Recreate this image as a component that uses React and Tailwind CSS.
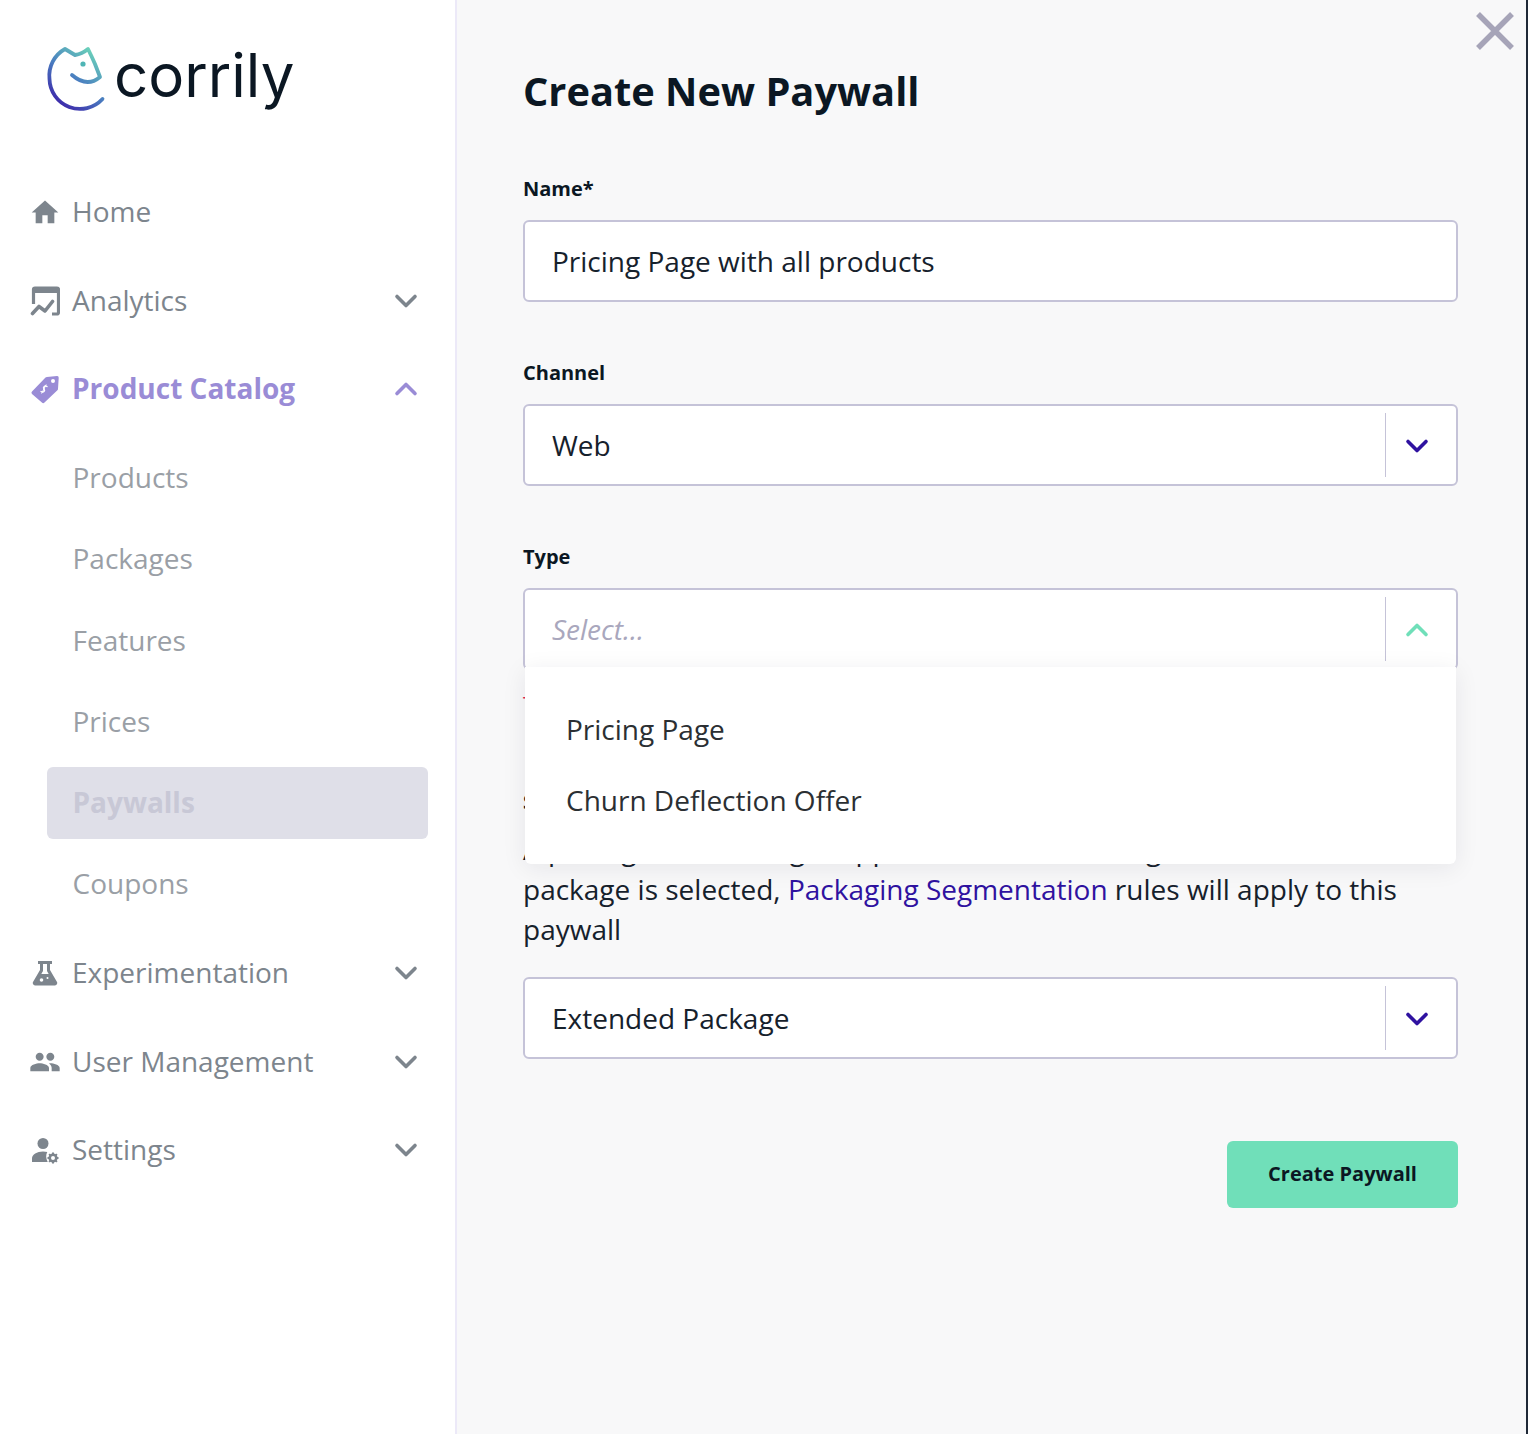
import React from 'react';
import { ChevronDown, ChevronUp } from 'lucide-react';
import { MdHome, MdPeople } from 'react-icons/md';

function Logo() {
  return (
    <svg width="70" height="76" viewBox="44 42 70 76" className="shrink-0">
      <defs>
        <linearGradient id="logoGrad" x1="52" y1="108" x2="98" y2="48" gradientUnits="userSpaceOnUse">
          <stop offset="0" stopColor="#3a16a6" />
          <stop offset="0.5" stopColor="#4a7fc0" />
          <stop offset="1" stopColor="#70dfb9" />
        </linearGradient>
      </defs>
      <path
        d="M102.5 99 A 30.5 30.5 0 0 1 49.5 79 A 30.5 30.5 0 0 1 65 49 L75 55 Q82 54 88 49 Q92 57 95 64 L100 77 Q87 88 72 75"
        fill="none"
        stroke="url(#logoGrad)"
        strokeWidth="3.8"
        strokeLinecap="round"
        strokeLinejoin="round"
      />
      <circle cx="83" cy="64" r="2.6" fill="#4fb5b5" />
    </svg>
  );
}

const AnalyticsIcon = () => (
  <svg width="30" height="30" viewBox="0 0 30 30" fill="none">
    <path d="M3.5 18V3.5A1.5 1.5 0 0 1 5 2h22a1.5 1.5 0 0 1 1.5 1.5v23a1.5 1.5 0 0 1-1.5 1.5h-5" stroke="#7d858d" strokeWidth="3.2" />
    <path d="M3 2h25v5H3z" fill="#7d858d" />
    <path d="M2.5 27.5l6.5-7 6 4.5 7.5-9.5" stroke="#7d858d" strokeWidth="3.6" strokeLinecap="round" strokeLinejoin="round" />
  </svg>
);

const TagIcon = () => (
  <svg width="30" height="30" viewBox="0 0 30 30">
    <path d="M2 17.5 15.5 3.5a2 2 0 0 1 1.4-.6L27 2a1.6 1.6 0 0 1 1.7 1.7L28 15a2 2 0 0 1-.6 1.3L14.5 28.5a1.8 1.8 0 0 1-2.6 0L2 19.9a1.7 1.7 0 0 1 0-2.4z" fill="#9a8cd6" />
    <circle cx="23" cy="7" r="2" fill="#fff" />
    <path d="M17 12.5c-2-1.5-4.5.5-3 2.5s-.5 4-3 2.5" fill="none" stroke="#fff" strokeWidth="1.4" strokeLinecap="round" />
    <path d="M16.2 10.5l-4.6 9" stroke="#fff" strokeWidth="1" />
  </svg>
);

const FlaskIcon = () => (
  <svg width="26" height="26" viewBox="0 0 26 26">
    <path d="M6 1h14v3h-2v6l7 12a2.4 2.4 0 0 1-2 3.4H3A2.4 2.4 0 0 1 1 22L8 10V4H6z" fill="#7d858d" />
    <path d="M11 4h4v7l1.7 3H9.3L11 11z" fill="#fff" />
    <circle cx="9.5" cy="20" r="1.8" fill="#fff" />
    <circle cx="15.5" cy="18" r="1" fill="#fff" />
  </svg>
);

const SettingsIcon = () => (
  <svg width="30" height="30" viewBox="0 0 30 30">
    <circle cx="13" cy="8.5" r="5.5" fill="#7d858d" />
    <path d="M2 27v-3.5c0-4 5-7 11-7 1.6 0 3 .2 4.3.6-1.6 2.8-1.5 6.4.4 9.9z" fill="#7d858d" />
    <circle cx="23" cy="23" r="3.3" fill="none" stroke="#7d858d" strokeWidth="2.6" />
    <path d="M23 17.5v2.2M23 26.3v2.2M17.5 23h2.2M26.3 23h2.2M19.1 19.1l1.5 1.5M25.400 25.4l1.5 1.5M26.9 19.1l-1.5 1.5M20.6 25.4l-1.5 1.5" stroke="#7d858d" strokeWidth="2" />
  </svg>
);

function NavRow({ icon, label, chevron, active }) {
  return (
    <div className="flex items-center h-[72px] pl-[29px] pr-[31px]">
      <div className="w-[32px] h-[32px] flex items-center justify-center shrink-0">{icon}</div>
      <span className={`ml-[11px] mt-[-2px] flex-1 text-[28px] ${active ? 'font-bold text-[#9a8cd6]' : 'text-[#7d858d]'}`}>{label}</span>
      {chevron === 'down' && <ChevronDown size={36} strokeWidth={2.4} className="text-[#7d858d]" />}
      {chevron === 'up' && <ChevronUp size={36} strokeWidth={2.4} className="text-[#9a8cd6]" />}
    </div>
  );
}

function SubRow({ label, active }) {
  return (
    <div className={`flex items-center h-[72px] ml-[47px] mr-[27px] pl-[26px] pb-[1px] rounded-md text-[28px] ${active ? 'bg-[#dfdfe8] text-[#c8c8d6] font-bold' : 'text-[#9a9fa6]'}`}>
      <span className="ml-[-0.5px]">{label}</span>
    </div>
  );
}

function Sidebar() {
  return (
    <aside className="w-[457px] shrink-0 bg-white border-r-2 border-[#ece9f8]">
      <div className="flex items-start h-[176px] pl-[44px] pt-[42px]">
        <Logo />
        <span className="mt-[-5px] text-[60px] leading-[76px] text-[#0b1723] font-[Inter,sans-serif] font-normal">corrily</span>
      </div>
      <div className="flex flex-col">
        <div className="mb-[16.5px]"><NavRow icon={<MdHome size={33} color="#7d858d" />} label="Home" /></div>
        <div className="mb-[16.5px]"><NavRow icon={<AnalyticsIcon />} label="Analytics" chevron="down" /></div>
        <div className="mb-[16.5px]"><NavRow icon={<TagIcon />} label="Product Catalog" chevron="up" active /></div>
        <div className="flex flex-col gap-[9.25px] mb-[17.5px]">
          <SubRow label="Products" />
          <SubRow label="Packages" />
          <SubRow label="Features" />
          <SubRow label="Prices" />
          <SubRow label="Paywalls" active />
          <SubRow label="Coupons" />
        </div>
        <div className="mb-[16.5px]"><NavRow icon={<FlaskIcon />} label="Experimentation" chevron="down" /></div>
        <div className="mb-[16.5px]"><NavRow icon={<MdPeople size={32} color="#7d858d" />} label="User Management" chevron="down" /></div>
        <NavRow icon={<SettingsIcon />} label="Settings" chevron="down" />
      </div>
    </aside>
  );
}

function FieldLabel({ children }) {
  return <div className="h-[28px] leading-[28px] text-[20px] font-bold text-[#0b1723]">{children}</div>;
}

function SelectBox({ value, placeholder, open, children }) {
  return (
    <div className="relative">
      <div className="flex items-center h-[82px] bg-white border-2 border-[#c5c3d8] rounded-md pl-[27px]">
        <span className={`flex-1 text-[28px] ${placeholder ? 'italic text-[#a9a7bd]' : 'text-[#16212c]'}`}>{placeholder || value}</span>
        <div className="w-px h-[64px] bg-[#c5c3d8]" />
        <div className="w-[70px] pr-[8px] pt-[2px] flex justify-center">
          {open
            ? <ChevronUp size={36} strokeWidth={2.4} className="text-[#70dfb9]" />
            : <ChevronDown size={36} strokeWidth={2.4} className="text-[#2f12a0]" />}
        </div>
      </div>
      {children}
    </div>
  );
}

export default function App() {
  return (
    <div className="flex min-h-[1434px] font-['Open_Sans',sans-serif] bg-[#1f2937]">
      <Sidebar />
      <main className="relative w-[1069px] mr-[2px] bg-[#f8f8f9] pl-[66px] pr-[68px] pt-[61px]">
        <svg width="38" height="38" viewBox="0 0 38 38" className="absolute top-[12px] right-[12px]">
          <path d="M2 2 36 36M36 2 2 36" stroke="#a6a4b8" strokeWidth="5.5" />
        </svg>

        <h1 className="h-[60px] leading-[60px] text-[39.8px] font-bold text-[#0b1723]">Create New Paywall</h1>

        <div className="mt-[54px]"><FieldLabel>Name*</FieldLabel></div>
        <div className="mt-[17px] flex items-center h-[82px] bg-white border-2 border-[#c5c3d8] rounded-md pl-[27px] text-[28px] text-[#16212c]">
          Pricing Page with all products
        </div>

        <div className="mt-[57px]"><FieldLabel>Channel</FieldLabel></div>
        <div className="mt-[17px]"><SelectBox value="Web" /></div>

        <div className="mt-[57px]"><FieldLabel>Type</FieldLabel></div>
        <div className="mt-[17px] relative z-10">
          <SelectBox placeholder="Select..." open>
            <div className="absolute left-[2px] right-[2px] top-[79px] h-[197px] bg-white rounded-b-md shadow-[0_4px_24px_rgba(20,20,50,0.08)] flex flex-col justify-center pb-[2px] pl-[41px] text-[28px] text-[#2b2f33]">
              <div className="h-[71px] leading-[71px]">Pricing Page</div>
              <div className="h-[71px] leading-[71px]">Churn Deflection Offer</div>
            </div>
          </SelectBox>
        </div>

        <div className="mt-[20px] h-[28px] leading-[28px] text-[20px] text-[#e0244f]">This field is required</div>

        <div className="mt-[70px]"><FieldLabel>Select Package</FieldLabel></div>
        <p className="mt-[13px] text-[28px] leading-[40px] text-[#16212c]">
          A pricing table setting is applied to all in its listing. When a chosen package is selected, <span className="text-[#2f12a0]">Packaging Segmentation</span> rules will apply to this paywall
        </p>

        <div className="mt-[28px]"><SelectBox value="Extended Package" /></div>

        <div className="mt-[82px] flex justify-end">
          <button className="w-[231px] h-[67px] pb-[2px] rounded-md bg-[#70dfb9] text-[20px] font-bold text-[#0b1723]">Create Paywall</button>
        </div>
      </main>
    </div>
  );
}
